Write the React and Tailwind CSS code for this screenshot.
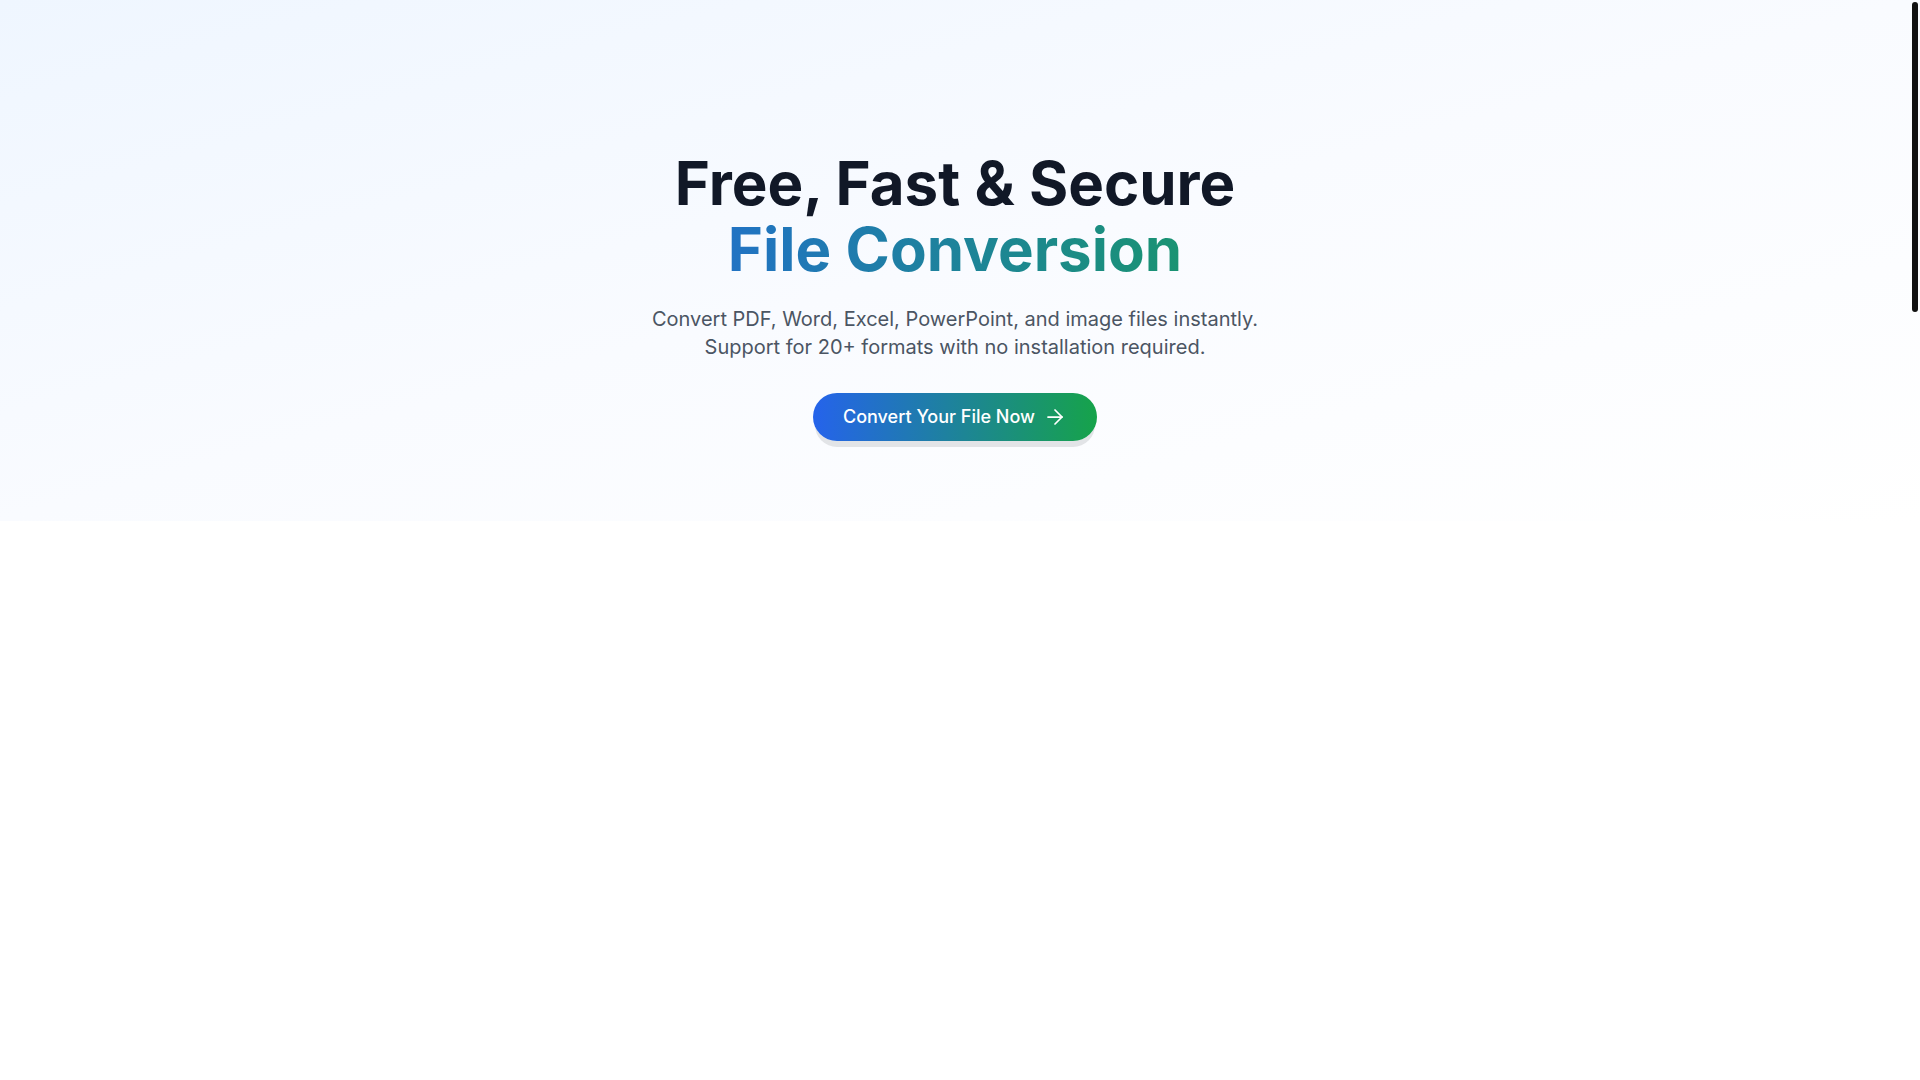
import React from "react";
import { ArrowRight } from "lucide-react";

export default function App() {
  return (
    <div className="min-h-screen bg-white" style={{ fontFamily: "Inter, 'Noto Sans', sans-serif" }}>
      <section className="bg-linear-to-br/srgb from-[#eff6ff] via-[#f9fbff] to-white pr-[10px] pt-[150px] pb-20">
        <div className="mx-auto max-w-4xl text-center">
          <h1 className="text-[60px] font-bold leading-[66px] text-[#111827]">
            Free, Fast &amp; Secure
            <span className="block bg-linear-to-r/srgb from-[#2563eb] to-[#16a34a] bg-clip-text text-transparent">
              File Conversion
            </span>
          </h1>
          <p className="mx-auto mt-[23px] text-xl leading-7 text-[#4b5563]">
            Convert PDF, Word, Excel, PowerPoint, and image files instantly.
            <br />
            Support for 20+ formats with no installation required.
          </p>
          <div className="mt-8 flex justify-center">
            <button className="flex h-12 items-center gap-2 rounded-full bg-linear-to-r/srgb from-[#2563eb] to-[#16a34a] px-[30px] text-lg font-medium text-white shadow-[0_8px_0_-2px_#e2e4e7]">
              Convert Your File Now
              <ArrowRight size={24} strokeWidth={1.75} />
            </button>
          </div>
        </div>
      </section>
      <div className="fixed right-[2px] top-[2px] h-[310px] w-[6px] rounded-full bg-[#111111]" />
    </div>
  );
}
